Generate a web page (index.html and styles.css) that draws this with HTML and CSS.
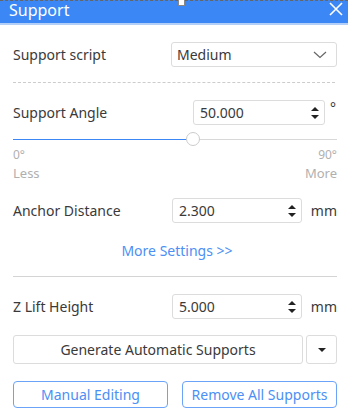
FILE: index.html
```html
<!DOCTYPE html>
<html>

<head>
    <title>Support</title>
    <meta name="viewport" content="width=device-width, initial-scale=1" charset="UTF-8">
    <link rel="stylesheet" href="styles.css">
</head>

<body>
    <div class="panel">
        <!-- 标题栏 -->
        <div class="title-bar">
            <span class="title">Support</span>
            <svg class="close" width="14" height="14" viewBox="0 0 14 14">
                <path d="M1 1 L13 13 M13 1 L1 13" stroke="#ffffff" stroke-width="1.6" />
            </svg>
            <span class="handle"></span>
        </div>

        <div class="content">
            <div class="row row-script">
                <span class="label">Support script</span>
                <div class="select">
                    <span>Medium</span>
                    <svg width="14" height="8" viewBox="0 0 14 8">
                        <path d="M1 1 L7 6.5 L13 1" fill="none" stroke="#666" stroke-width="1.2" />
                    </svg>
                </div>
            </div>

            <div class="dash-line"></div>

            <div class="row row-angle">
                <span class="label">Support Angle</span>
                <div class="spin spin-angle">
                    <span>50.000</span>
                    <span class="arrows"><i class="up"></i><i class="down"></i></span>
                </div>
                <span class="unit unit-deg">°</span>
            </div>

            <div class="slider">
                <div class="track-fill" style="width: 55.5%;"></div>
                <div class="thumb" style="left: 55.5%;"></div>
            </div>
            <div class="scale">
                <span>0°</span>
                <span>90°</span>
            </div>
            <div class="scale scale-words">
                <span>Less</span>
                <span>More</span>
            </div>

            <div class="row row-anchor">
                <span class="label">Anchor Distance</span>
                <div class="spin">
                    <span>2.300</span>
                    <span class="arrows"><i class="up"></i><i class="down"></i></span>
                </div>
                <span class="unit">mm</span>
            </div>

            <div class="more">More Settings &gt;&gt;</div>

            <div class="solid-line"></div>

            <div class="row row-lift">
                <span class="label">Z Lift Height</span>
                <div class="spin">
                    <span>5.000</span>
                    <span class="arrows"><i class="up"></i><i class="down"></i></span>
                </div>
                <span class="unit">mm</span>
            </div>

            <div class="gen-row">
                <div class="btn-gen">Generate Automatic Supports</div>
                <div class="btn-drop"><i class="down"></i></div>
            </div>

            <div class="btn-row">
                <div class="btn-blue">Manual Editing</div>
                <div class="btn-blue">Remove All Supports</div>
            </div>
        </div>
    </div>
</body>

</html>
```
FILE: styles.css
```css
body {
    margin: 0;
    background-color: #ffffff;
    font-family: "Noto Sans", "Open Sans", sans-serif;
    color: #3a3a3a;
}

.panel {
    width: 348px;
    height: 416px;
    overflow: hidden;
}

.title-bar {
    position: relative;
    height: 22px;
    background-color: #3c87f6;
    border-top: 1px dashed #666666;
    border-bottom: 2px solid #b3cff8;
    display: flex;
    align-items: center;
    justify-content: space-between;
    padding: 0 5px 0 9px;
}

.title {
    color: #ffffff;
    font-size: 16px;
    line-height: 20px;
    margin-top: -4px;
}

.close {
    margin-top: -6px;
}

.handle {
    position: absolute;
    left: 178px;
    top: -2px;
    width: 5px;
    height: 5px;
    background-color: #ffffff;
    border: 1px solid #888888;
}

.content {
    padding: 0 11px 0 13px;
}

.row {
    display: flex;
    align-items: center;
    font-size: 14px;
}

.label {
    flex: 1;
}

.row-script {
    margin-top: 17px;
}

.select {
    width: 150px;
    height: 23px;
    border: 1px solid #dcdcdc;
    border-radius: 3px;
    display: flex;
    align-items: center;
    justify-content: space-between;
    padding: 0 9px 0 5px;
    font-size: 14px;
}

.dash-line {
    margin-top: 15px;
    border-top: 1px dashed #cccccc;
    margin-right: 2px;
}

.row-angle {
    margin-top: 17px;
}

.spin {
    height: 23px;
    border: 1px solid #dcdcdc;
    border-radius: 3px;
    display: flex;
    align-items: center;
    justify-content: space-between;
    padding: 0 5px 0 6px;
    width: 117px;
}

.spin-angle {
    width: 119px;
}

.arrows {
    display: flex;
    flex-direction: column;
    gap: 4px;
}

.up {
    display: block;
    width: 0;
    height: 0;
    border-left: 4px solid transparent;
    border-right: 4px solid transparent;
    border-bottom: 4px solid #222222;
}

.down {
    display: block;
    width: 0;
    height: 0;
    border-left: 4px solid transparent;
    border-right: 4px solid transparent;
    border-top: 4px solid #222222;
}

.unit {
    width: 27px;
    text-align: right;
    margin-left: 8px;
}

.unit-deg {
    width: 11px;
    margin-left: 0;
    padding-right: 1px;
    align-self: flex-start;
    margin-top: -2px;
}

.slider {
    position: relative;
    margin-top: 14px;
    height: 1px;
    background-color: #d8d8d8;
}

.track-fill {
    height: 1px;
    background-color: #3c87f6;
}

.thumb {
    position: absolute;
    top: -7px;
    width: 12px;
    height: 12px;
    margin-left: -7px;
    border: 1.5px solid #cccccc;
    border-radius: 50%;
    background-color: #ffffff;
}

.scale {
    display: flex;
    justify-content: space-between;
    font-size: 12px;
    color: #b0b0b0;
    margin-top: 8px;
    line-height: 14px;
}

.scale-words {
    font-size: 13px;
    margin-top: 4px;
}

.row-anchor {
    margin-top: 18px;
}

.more {
    text-align: center;
    color: #4c8ff5;
    font-size: 14px;
    margin-top: 18px;
    margin-right: -4px;
}

.solid-line {
    margin-top: 16px;
    border-top: 1px solid #d4d4d4;
}

.row-lift {
    margin-top: 17px;
}

.gen-row {
    display: flex;
    gap: 3px;
    margin-top: 16px;
    height: 29px;
}

.btn-gen {
    flex: 1;
    border: 1px solid #dcdcdc;
    border-radius: 3px;
    display: flex;
    align-items: center;
    justify-content: center;
    font-size: 14px;
}

.btn-drop {
    width: 29px;
    border: 1px solid #dcdcdc;
    border-radius: 3px;
    display: flex;
    align-items: center;
    justify-content: center;
}

.btn-row {
    display: flex;
    justify-content: space-between;
    margin-top: 17px;
}

.btn-blue {
    width: 153px;
    height: 25px;
    border: 1.5px solid #6aa3f7;
    border-radius: 4px;
    color: #4c8ff5;
    font-size: 14px;
    display: flex;
    align-items: center;
    justify-content: center;
}
```
